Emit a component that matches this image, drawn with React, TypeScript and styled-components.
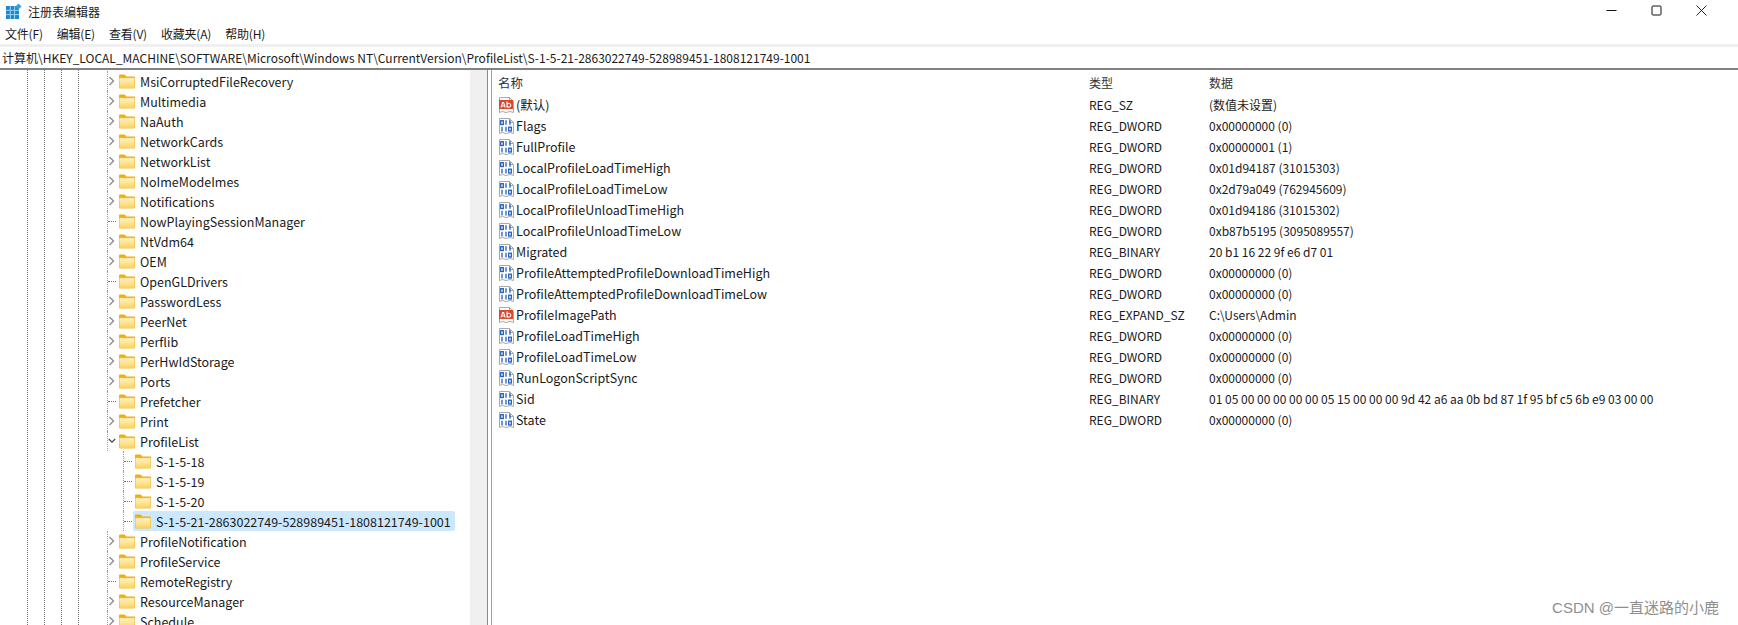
import React from 'react';
import styled, { createGlobalStyle } from 'styled-components';

const FONT = '"Noto Sans CJK SC", "Open Sans", "Liberation Sans", sans-serif';

interface TreeItem {
  name: string;
  arrow?: 'closed' | 'open' | 'none';
  child?: boolean;
  selected?: boolean;
  last?: boolean;
}

const treeItems: TreeItem[] = [
  { name: 'MsiCorruptedFileRecovery', arrow: 'closed' },
  { name: 'Multimedia', arrow: 'closed' },
  { name: 'NaAuth', arrow: 'closed' },
  { name: 'NetworkCards', arrow: 'closed' },
  { name: 'NetworkList', arrow: 'closed' },
  { name: 'NoImeModeImes', arrow: 'closed' },
  { name: 'Notifications', arrow: 'closed' },
  { name: 'NowPlayingSessionManager', arrow: 'none' },
  { name: 'NtVdm64', arrow: 'closed' },
  { name: 'OEM', arrow: 'closed' },
  { name: 'OpenGLDrivers', arrow: 'none' },
  { name: 'PasswordLess', arrow: 'closed' },
  { name: 'PeerNet', arrow: 'closed' },
  { name: 'Perflib', arrow: 'closed' },
  { name: 'PerHwIdStorage', arrow: 'closed' },
  { name: 'Ports', arrow: 'closed' },
  { name: 'Prefetcher', arrow: 'none' },
  { name: 'Print', arrow: 'closed' },
  { name: 'ProfileList', arrow: 'open' },
  { name: 'S-1-5-18', child: true },
  { name: 'S-1-5-19', child: true },
  { name: 'S-1-5-20', child: true },
  { name: 'S-1-5-21-2863022749-528989451-1808121749-1001', child: true, selected: true, last: true },
  { name: 'ProfileNotification', arrow: 'closed' },
  { name: 'ProfileService', arrow: 'closed' },
  { name: 'RemoteRegistry', arrow: 'none' },
  { name: 'ResourceManager', arrow: 'closed' },
  { name: 'Schedule', arrow: 'closed' },
];

interface RegValue {
  name: string;
  type: string;
  data: string;
  text?: boolean;
}

const values: RegValue[] = [
  { name: '(默认)', type: 'REG_SZ', data: '(数值未设置)', text: true },
  { name: 'Flags', type: 'REG_DWORD', data: '0x00000000 (0)' },
  { name: 'FullProfile', type: 'REG_DWORD', data: '0x00000001 (1)' },
  { name: 'LocalProfileLoadTimeHigh', type: 'REG_DWORD', data: '0x01d94187 (31015303)' },
  { name: 'LocalProfileLoadTimeLow', type: 'REG_DWORD', data: '0x2d79a049 (762945609)' },
  { name: 'LocalProfileUnloadTimeHigh', type: 'REG_DWORD', data: '0x01d94186 (31015302)' },
  { name: 'LocalProfileUnloadTimeLow', type: 'REG_DWORD', data: '0xb87b5195 (3095089557)' },
  { name: 'Migrated', type: 'REG_BINARY', data: '20 b1 16 22 9f e6 d7 01' },
  { name: 'ProfileAttemptedProfileDownloadTimeHigh', type: 'REG_DWORD', data: '0x00000000 (0)' },
  { name: 'ProfileAttemptedProfileDownloadTimeLow', type: 'REG_DWORD', data: '0x00000000 (0)' },
  { name: 'ProfileImagePath', type: 'REG_EXPAND_SZ', data: 'C:\\Users\\Admin', text: true },
  { name: 'ProfileLoadTimeHigh', type: 'REG_DWORD', data: '0x00000000 (0)' },
  { name: 'ProfileLoadTimeLow', type: 'REG_DWORD', data: '0x00000000 (0)' },
  { name: 'RunLogonScriptSync', type: 'REG_DWORD', data: '0x00000000 (0)' },
  { name: 'Sid', type: 'REG_BINARY', data: '01 05 00 00 00 00 00 05 15 00 00 00 9d 42 a6 aa 0b bd 87 1f 95 bf c5 6b e9 03 00 00' },
  { name: 'State', type: 'REG_DWORD', data: '0x00000000 (0)' },
];

const menus = ['文件(F)', '编辑(E)', '查看(V)', '收藏夹(A)', '帮助(H)'];

const AppLogo = () => (
  <svg width="16" height="16" viewBox="0 0 16 16">
    <rect x="0" y="3" width="13" height="13" fill="#1b86d1" />
    <path d="M0 7.3h13M0 11.6h13M4.3 3v13M8.6 3v13" stroke="#9fd3f2" strokeWidth="1" />
    <path d="M12.5 0.5l3 3-3 3-3-3z" fill="#35a4e4" />
  </svg>
);

const Folder = () => (
  <svg width="16" height="15" viewBox="0 0 16 15">
    <path d="M0 1.5a1 1 0 0 1 1-1h4.5l2 2H15a1 1 0 0 1 1 1V5H0z" fill="#f2ad0f" />
    <rect x="0" y="3.5" width="16" height="11" rx="0.8" fill="#f5bd3a" />
    <rect x="0.6" y="4.2" width="14.8" height="9.7" fill="url(#folderFill)" />
    <defs>
      <linearGradient id="folderFill" x1="0" y1="0" x2="0" y2="1">
        <stop offset="0" stopColor="#fff3c4" />
        <stop offset="1" stopColor="#fdd35f" />
      </linearGradient>
    </defs>
  </svg>
);

const ChevronRight = () => (
  <svg width="8" height="10" viewBox="0 0 8 10">
    <path d="M1.5 1l4 4-4 4" fill="none" stroke="#8e8e8e" strokeWidth="1.4" />
  </svg>
);

const ChevronDown = () => (
  <svg width="10" height="8" viewBox="0 0 10 8">
    <path d="M1 1.5l4 4 4-4" fill="none" stroke="#404040" strokeWidth="1.4" />
  </svg>
);

// page-corner icon shared by both value kinds
const ValueSheet = ({ children }: { children: React.ReactNode }) => (
  <svg width="16" height="16" viewBox="0 0 16 16">
    <path d="M1.5 0.5H11.5L15.5 4.5V15.5L12 14.5 8 15.5 4.5 14.5 1.5 15.5z" fill="#fff" stroke="#a9a9a9" strokeWidth="1" />
    <path d="M11.5 0.5V4.5H15.5" fill="none" stroke="#a9a9a9" strokeWidth="1" />
    {children}
  </svg>
);

const StringIcon = () => (
  <ValueSheet>
    <rect x="1" y="3" width="14" height="9" fill="#d9482b" />
    <path d="M3 10.5l1.6-5h1l1.6 5M3.7 9h2.9" fill="none" stroke="#fff" strokeWidth="1.1" />
    <path d="M9 4.5v6M9 8.2a1.9 1.9 0 1 1 0 .1" fill="none" stroke="#fff" strokeWidth="1.1" />
  </ValueSheet>
);

const BinaryIcon = () => (
  <ValueSheet>
    <g fill="none" stroke="#1f5fbf" strokeWidth="1.3">
      <rect x="2.7" y="2.7" width="2.6" height="3.8" />
      <path d="M8 2.2v4.6M12 2.2v4.6" />
      <path d="M4 8.8v4.6M8 8.8v4.6" />
      <rect x="10.7" y="9.2" width="2.6" height="3.8" />
    </g>
  </ValueSheet>
);

const Minimize = () => (
  <svg width="11" height="11" viewBox="0 0 11 11">
    <path d="M0.5 5.5h10" stroke="#111" strokeWidth="1" />
  </svg>
);

const Maximize = () => (
  <svg width="11" height="11" viewBox="0 0 11 11">
    <rect x="1" y="1" width="9" height="9" rx="1" fill="none" stroke="#111" strokeWidth="1" />
  </svg>
);

const CloseGlyph = () => (
  <svg width="11" height="11" viewBox="0 0 11 11">
    <path d="M0.5 0.5l10 10M10.5 0.5l-10 10" stroke="#222" strokeWidth="1" />
  </svg>
);

const App: React.FC = () => (
  <Window>
    <GlobalStyle />
    <TitleBar>
      <TitleLeft>
        <AppLogo />
        <TitleText>注册表编辑器</TitleText>
      </TitleLeft>
      <WindowControls>
        <WindowButton><Minimize /></WindowButton>
        <WindowButton><Maximize /></WindowButton>
        <WindowButton><CloseGlyph /></WindowButton>
      </WindowControls>
    </TitleBar>
    <MenuBar>
      {menus.map(menu => (
        <MenuItem key={menu}>{menu}</MenuItem>
      ))}
    </MenuBar>
    <AddressBar>计算机\HKEY_LOCAL_MACHINE\SOFTWARE\Microsoft\Windows NT\CurrentVersion\ProfileList\S-1-5-21-2863022749-528989451-1808121749-1001</AddressBar>
    <Panes>
      <TreePane>
        <Guides>
          <Guide />
          <Guide />
          <Guide />
          <Guide />
        </Guides>
        <TreeList>
          {treeItems.map(item => (
            <TreeRow key={item.name} $child={item.child}>
              <ArrowSlot $guide={!item.child}>
                {item.arrow === 'closed' && <ChevronRight />}
                {item.arrow === 'open' && <ChevronDown />}
                {(item.arrow === 'none' || item.child) && <Tick />}
              </ArrowSlot>
              <TreeLabel $selected={item.selected}>
                <Folder />
                <span>{item.name}</span>
              </TreeLabel>
            </TreeRow>
          ))}
        </TreeList>
        <TreeScrollTrack />
      </TreePane>
      <Splitter />
      <ValuePane>
        <ColumnHeader>
          <NameCol>名称</NameCol>
          <TypeCol>类型</TypeCol>
          <DataCol>数据</DataCol>
        </ColumnHeader>
        {values.map(value => (
          <ValueRow key={value.name}>
            <NameCol>
              {value.text ? <StringIcon /> : <BinaryIcon />}
              <span>{value.name}</span>
            </NameCol>
            <TypeCol>{value.type}</TypeCol>
            <DataCol>{value.data}</DataCol>
          </ValueRow>
        ))}
        <Watermark>CSDN @一直迷路的小鹿</Watermark>
      </ValuePane>
    </Panes>
  </Window>
);

const GlobalStyle = createGlobalStyle`
  html, body {
    margin: 0;
    background: #fff;
    overflow: hidden;
  }
`;

const Window = styled.div`
  width: 1738px;
  height: 625px;
  display: flex;
  flex-direction: column;
  overflow: hidden;
  font-family: ${FONT};
  font-size: 12px;
  color: #1a1a1a;
  background: #fff;
`;

const TitleBar = styled.div`
  height: 22px;
  display: flex;
  justify-content: space-between;
  align-items: center;
  padding-left: 6px;
`;

const TitleLeft = styled.div`
  display: flex;
  align-items: center;
  gap: 6px;
`;

const TitleText = styled.span`
  font-size: 12px;
`;

const WindowControls = styled.div`
  display: flex;
  padding-right: 14px;
  margin-top: -2px;
`;

const WindowButton = styled.div`
  width: 45px;
  display: flex;
  justify-content: center;
  align-items: center;
`;

const MenuBar = styled.div`
  height: 22px;
  display: flex;
  align-items: center;
  gap: 14px;
  padding-left: 5px;
  border-bottom: 3px solid #f0f0f0;
`;

const MenuItem = styled.span`
  font-size: 12px;
  letter-spacing: -0.2px;
`;

const AddressBar = styled.div`
  height: 21px;
  line-height: 21px;
  padding-left: 2px;
  font-size: 12px;
  white-space: nowrap;
  border-bottom: 2px solid #828282;
`;

const Panes = styled.div`
  flex: 1;
  min-height: 0;
  display: flex;
`;

const TreePane = styled.div`
  position: relative;
  width: 487px;
  display: flex;
  overflow: hidden;
`;

const Guides = styled.div`
  width: 107px;
  flex: none;
  padding-left: 27px;
  display: flex;
  gap: 15px;
  box-sizing: border-box;
`;

const Guide = styled.div`
  width: 1px;
  height: 100%;
  border-left: 1px dotted #777;
`;

const TreeList = styled.div`
  flex: 1;
  padding-top: 1px;
`;

const TreeRow = styled.div<{ $child?: boolean }>`
  height: 20px;
  display: flex;
  align-items: center;
  padding-left: ${props => (props.$child ? '16px' : '0')};
`;

const ArrowSlot = styled.div<{ $guide?: boolean }>`
  width: 8px;
  height: 20px;
  flex: none;
  display: flex;
  align-items: center;
  justify-content: center;
  border-left: 1px dotted #9a9a9a;
  margin-left: 0;
  box-sizing: content-box;
  padding-right: 1px;
`;

const Tick = styled.div`
  width: 100%;
  border-top: 1px dotted #777;
`;

const TreeLabel = styled.div<{ $selected?: boolean }>`
  height: 20px;
  display: flex;
  align-items: center;
  gap: 5px;
  padding: 0 4px 0 2px;
  border-radius: 2px;
  white-space: nowrap;
  font-size: 12.5px;
  background: ${props => (props.$selected ? '#cce8ff' : 'transparent')};
`;

const TreeScrollTrack = styled.div`
  width: 17px;
  flex: none;
  background: #f0f0f0;
`;

const Splitter = styled.div`
  width: 5px;
  flex: none;
  background: #fff;
  border-left: 1px solid #8a8a8a;
  border-right: 1px solid #a0a0a0;
  box-sizing: border-box;
`;

const ValuePane = styled.div`
  position: relative;
  flex: 1;
  min-width: 0;
`;

const ColumnHeader = styled.div`
  height: 24px;
  display: flex;
  align-items: center;
  color: #333;
`;

const ValueRow = styled.div`
  height: 21px;
  display: flex;
  align-items: center;
  white-space: nowrap;
`;

const NameCol = styled.div`
  width: 597px;
  flex: none;
  display: flex;
  align-items: center;
  gap: 2px;
  padding-left: 6px;
  box-sizing: border-box;
  font-size: 12.5px;
`;

const TypeCol = styled.div`
  width: 120px;
  flex: none;
`;

const DataCol = styled.div`
  flex: 1;
`;

const Watermark = styled.div`
  position: absolute;
  right: 19px;
  bottom: 8px;
  font-size: 15px;
  color: #8f8f8f;
  font-family: "Liberation Sans", "Noto Sans CJK SC", sans-serif;
`;

export default App;
